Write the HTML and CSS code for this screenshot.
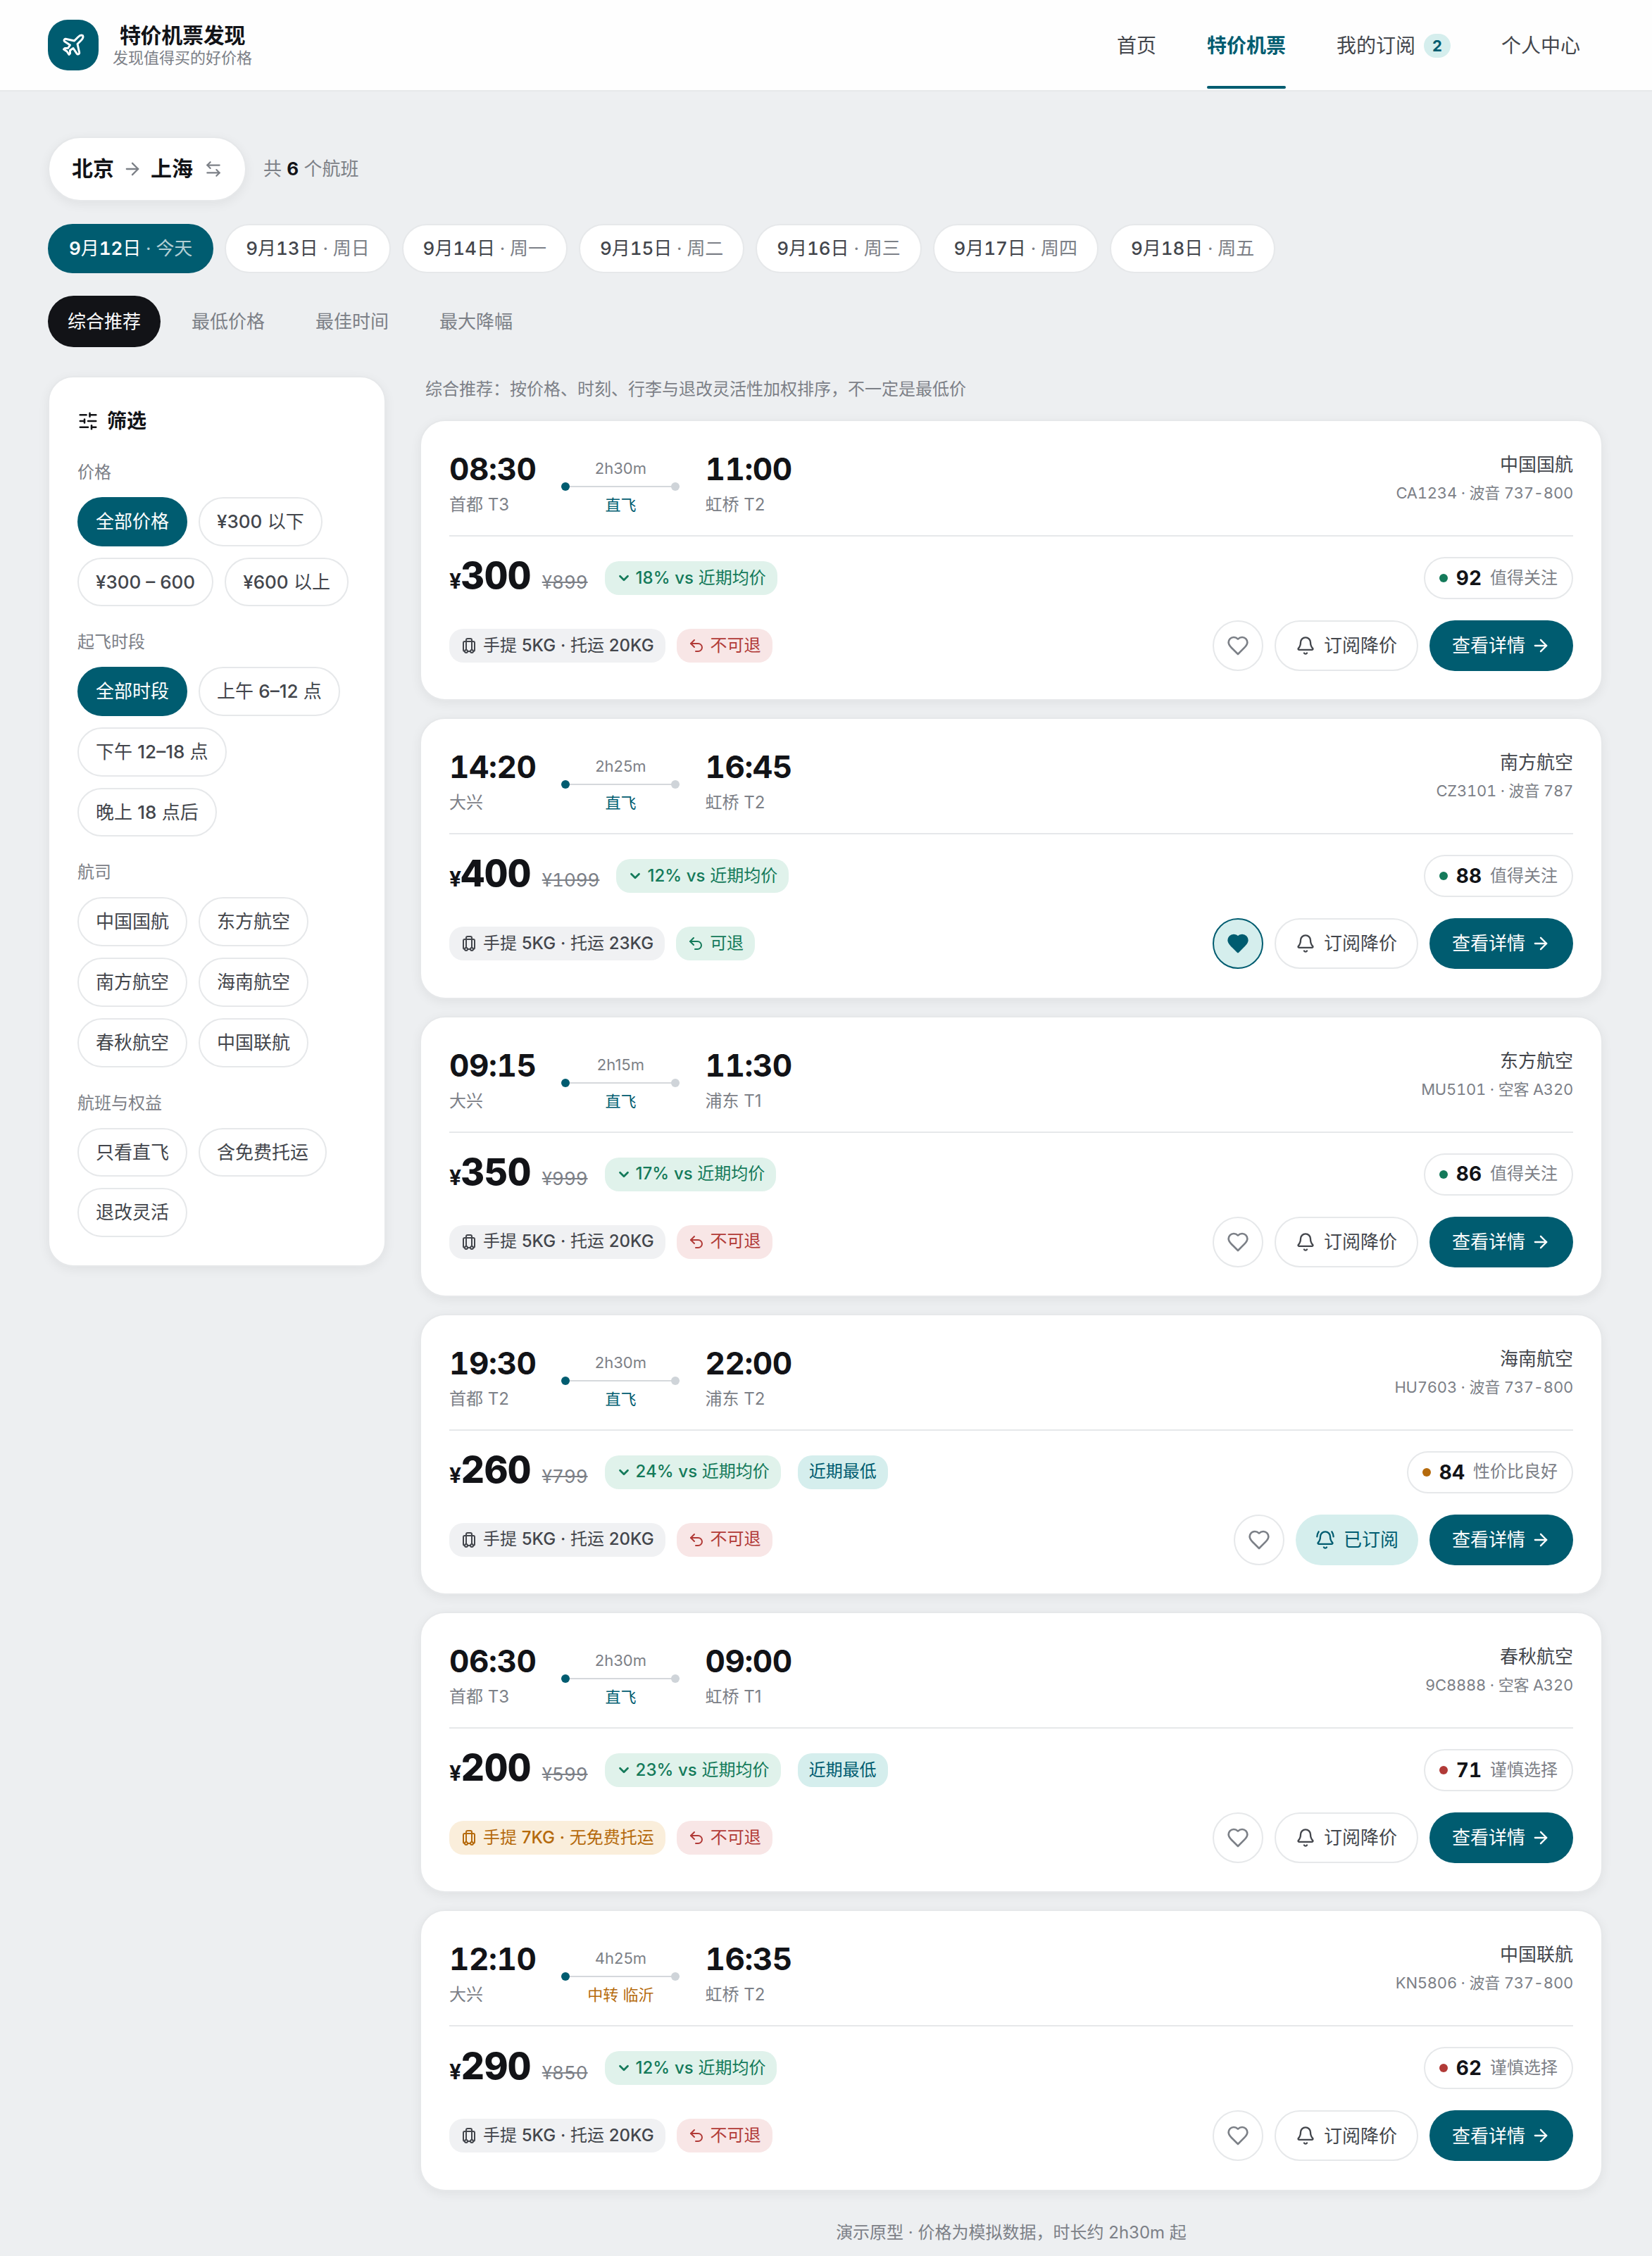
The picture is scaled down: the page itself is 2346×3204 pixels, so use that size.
FILE: index.html
```html
<!DOCTYPE html>
<html lang="zh-CN">
<head>
    <meta charset="UTF-8">
    <meta name="viewport" content="width=device-width, initial-scale=1.0">
    <title>特价机票发现</title>
    <link rel="stylesheet" href="styles.css">
</head>
<body>
    <svg class="sprite" xmlns="http://www.w3.org/2000/svg">
        <symbol id="plane" viewBox="0 0 24 24"><path d="M17.8 19.2 16 11l3.5-3.5C21 6 21.5 4 21 3c-1-.5-3 0-4.5 1.5L13 8 4.8 6.2c-.5-.1-.9.1-1.1.5l-.3.5c-.2.5-.1 1 .3 1.3L9 12l-2 3H4l-1 1 3 2 2 3 1-1v-3l3-2 3.5 5.3c.3.4.8.5 1.3.3l.5-.2c.4-.3.6-.7.5-1.2z"/></symbol>
        <symbol id="arrow" viewBox="0 0 24 24"><path d="M5 12h14"/><path d="m12 5 7 7-7 7"/></symbol>
        <symbol id="swap" viewBox="0 0 24 24"><path d="M8 3 4 7l4 4"/><path d="M4 7h16"/><path d="m16 21 4-4-4-4"/><path d="M20 17H4"/></symbol>
        <symbol id="sliders" viewBox="0 0 24 24"><path d="M10 5H3"/><path d="M12 19H3"/><path d="M14 3v4"/><path d="M16 17v4"/><path d="M21 12h-9"/><path d="M21 19h-5"/><path d="M21 5h-7"/><path d="M8 10v4"/><path d="M8 12H3"/></symbol>
        <symbol id="chevron" viewBox="0 0 24 24"><path d="m6 9 6 6 6-6"/></symbol>
        <symbol id="luggage" viewBox="0 0 24 24"><path d="M6 20a2 2 0 0 1-2-2V8a2 2 0 0 1 2-2h12a2 2 0 0 1 2 2v10a2 2 0 0 1-2 2"/><path d="M8 18V4a2 2 0 0 1 2-2h4a2 2 0 0 1 2 2v14"/><path d="M10 20h4"/><circle cx="16" cy="20" r="2"/><circle cx="8" cy="20" r="2"/></symbol>
        <symbol id="undo" viewBox="0 0 24 24"><path d="M9 14 4 9l5-5"/><path d="M4 9h10.5a5.5 5.5 0 0 1 5.5 5.5a5.5 5.5 0 0 1-5.5 5.5H11"/></symbol>
        <symbol id="heart" viewBox="0 0 24 24"><path d="M19 14c1.49-1.46 3-3.21 3-5.5A5.5 5.5 0 0 0 16.5 3c-1.76 0-3 .5-4.5 2-1.5-1.5-2.74-2-4.5-2A5.5 5.5 0 0 0 2 8.5c0 2.3 1.5 4.05 3 5.5l7 7Z"/></symbol>
        <symbol id="bell" viewBox="0 0 24 24"><path d="M10.268 21a2 2 0 0 0 3.464 0"/><path d="M3.262 15.326A1 1 0 0 0 4 17h16a1 1 0 0 0 .74-1.673C19.41 13.956 18 12.499 18 8A6 6 0 0 0 6 8c0 4.499-1.411 5.956-2.738 7.326"/></symbol>
        <symbol id="bell-ring" viewBox="0 0 24 24"><path d="M10.268 21a2 2 0 0 0 3.464 0"/><path d="M22 8c0-2.3-.8-4.3-2-6"/><path d="M3.262 15.326A1 1 0 0 0 4 17h16a1 1 0 0 0 .74-1.673C19.41 13.956 18 12.499 18 8A6 6 0 0 0 6 8c0 4.499-1.411 5.956-2.738 7.326"/><path d="M4 2C2.8 3.7 2 5.7 2 8"/></symbol>
    </svg>

    <header class="topbar">
        <div class="brand">
            <span class="logo"><svg class="icon"><use href="#plane"/></svg></span>
            <div class="brand-text">
                <div class="brand-name">特价机票发现</div>
                <div class="brand-sub">发现值得买的好价格</div>
            </div>
        </div>
        <nav class="nav">
            <a class="nav-item">首页</a>
            <a class="nav-item active">特价机票</a>
            <a class="nav-item">我的订阅<span class="count">2</span></a>
            <a class="nav-item">个人中心</a>
        </nav>
    </header>

    <main class="page">
        <div class="route-row">
            <button class="route">
                <span>北京</span>
                <svg class="icon route-arrow"><use href="#arrow"/></svg>
                <span>上海</span>
                <svg class="icon route-swap"><use href="#swap"/></svg>
            </button>
            <span class="total">共 <b>6</b> 个航班</span>
        </div>

        <div class="dates" id="dates"></div>

        <div class="sorts">
            <button class="sort active">综合推荐</button>
            <button class="sort">最低价格</button>
            <button class="sort">最佳时间</button>
            <button class="sort">最大降幅</button>
        </div>

        <div class="layout">
            <aside class="filters">
                <h2 class="filters-title"><svg class="icon"><use href="#sliders"/></svg>筛选</h2>
                <h3 class="group-name">价格</h3>
                <div class="chips">
                    <button class="chip active">全部价格</button>
                    <button class="chip"><span class="num">¥300</span> 以下</button>
                    <button class="chip"><span class="num">¥300 – 600</span></button>
                    <button class="chip"><span class="num">¥600</span> 以上</button>
                </div>
                <h3 class="group-name">起飞时段</h3>
                <div class="chips">
                    <button class="chip active">全部时段</button>
                    <button class="chip">上午 <span class="num">6–12</span> 点</button>
                    <button class="chip">下午 <span class="num">12–18</span> 点</button>
                    <button class="chip">晚上 <span class="num">18</span> 点后</button>
                </div>
                <h3 class="group-name">航司</h3>
                <div class="chips">
                    <button class="chip">中国国航</button>
                    <button class="chip">东方航空</button>
                    <button class="chip">南方航空</button>
                    <button class="chip">海南航空</button>
                    <button class="chip">春秋航空</button>
                    <button class="chip">中国联航</button>
                </div>
                <h3 class="group-name">航班与权益</h3>
                <div class="chips">
                    <button class="chip">只看直飞</button>
                    <button class="chip">含免费托运</button>
                    <button class="chip">退改灵活</button>
                </div>
            </aside>

            <section class="results">
                <p class="note">综合推荐：按价格、时刻、行李与退改灵活性加权排序，不一定是最低价</p>
                <div class="cards" id="cards"></div>
                <p class="footnote">演示原型 · 价格为模拟数据，时长约 2h30m 起</p>
            </section>
        </div>
    </main>

    <script>
        const dates = [
            ['9月12日', '今天'], ['9月13日', '周日'], ['9月14日', '周一'], ['9月15日', '周二'],
            ['9月16日', '周三'], ['9月17日', '周四'], ['9月18日', '周五']
        ];

        const flights = [
            { dep: '08:30', from: '首都 T3', dur: '2h30m', arr: '11:00', to: '虹桥 T2', airline: '中国国航', plane: 'CA1234 · 波音 737-800', price: 300, old: 899, drop: 18, bag: '手提 5KG · 托运 20KG', score: 92, level: 'good', label: '值得关注' },
            { dep: '14:20', from: '大兴', dur: '2h25m', arr: '16:45', to: '虹桥 T2', airline: '南方航空', plane: 'CZ3101 · 波音 787', price: 400, old: 1099, drop: 12, bag: '手提 5KG · 托运 23KG', refund: true, score: 88, level: 'good', label: '值得关注', liked: true },
            { dep: '09:15', from: '大兴', dur: '2h15m', arr: '11:30', to: '浦东 T1', airline: '东方航空', plane: 'MU5101 · 空客 A320', price: 350, old: 999, drop: 17, bag: '手提 5KG · 托运 20KG', score: 86, level: 'good', label: '值得关注' },
            { dep: '19:30', from: '首都 T2', dur: '2h30m', arr: '22:00', to: '浦东 T2', airline: '海南航空', plane: 'HU7603 · 波音 737-800', price: 260, old: 799, drop: 24, lowest: true, bag: '手提 5KG · 托运 20KG', score: 84, level: 'fair', label: '性价比良好', subscribed: true },
            { dep: '06:30', from: '首都 T3', dur: '2h30m', arr: '09:00', to: '虹桥 T1', airline: '春秋航空', plane: '9C8888 · 空客 A320', price: 200, old: 599, drop: 23, lowest: true, bag: '手提 7KG · 无免费托运', noBag: true, score: 71, level: 'poor', label: '谨慎选择' },
            { dep: '12:10', from: '大兴', dur: '4h25m', via: '中转 临沂', arr: '16:35', to: '虹桥 T2', airline: '中国联航', plane: 'KN5806 · 波音 737-800', price: 290, old: 850, drop: 12, bag: '手提 5KG · 托运 20KG', score: 62, level: 'poor', label: '谨慎选择' }
        ];

        function icon(name) {
            return `<svg class="icon"><use href="#${name}"/></svg>`;
        }

        // digits and latin letters are set a little heavier than the Chinese text
        function num(text) {
            return text.replace(/[0-9A-Za-z%·]+/g, '<span class="num">$&</span>');
        }

        function card(f) {
            return `
            <article class="card">
                <div class="card-top">
                    <div class="stop"><div class="time">${f.dep}</div><div class="place">${f.from}</div></div>
                    <div class="leg">
                        <div class="duration">${f.dur}</div>
                        <div class="track"><i></i><i></i></div>
                        <div class="${f.via ? 'via transfer' : 'via'}">${f.via || '直飞'}</div>
                    </div>
                    <div class="stop"><div class="time">${f.arr}</div><div class="place">${f.to}</div></div>
                    <div class="carrier"><div class="airline">${f.airline}</div><div class="aircraft">${f.plane}</div></div>
                </div>
                <div class="card-price">
                    <div class="fare"><span class="price"><small>¥</small>${f.price}</span><s class="old">¥${f.old}</s></div>
                    <span class="tag drop">${icon('chevron')}<span>${num(f.drop + '% vs 近期均价')}</span></span>
                    ${f.lowest ? '<span class="tag lowest">近期最低</span>' : ''}
                    <div class="score ${f.level}"><i></i><b>${f.score}</b>${f.label}</div>
                </div>
                <div class="card-actions">
                    <span class="tag ${f.noBag ? 'warn' : 'plain'}">${icon('luggage')}<span>${num(f.bag)}</span></span>
                    <span class="tag ${f.refund ? 'ok' : 'bad'}">${icon('undo')}${f.refund ? '可退' : '不可退'}</span>
                    <div class="actions">
                        <button class="${f.liked ? 'like liked' : 'like'}">${icon('heart')}</button>
                        ${f.subscribed
                            ? `<button class="btn subscribed">${icon('bell-ring')}已订阅</button>`
                            : `<button class="btn subscribe">${icon('bell')}订阅降价</button>`}
                        <button class="btn detail">查看详情${icon('arrow')}</button>
                    </div>
                </div>
            </article>`;
        }

        document.getElementById('dates').innerHTML = dates.map(([day, week], i) =>
            `<button class="${i === 0 ? 'date active' : 'date'}">${num(day)} <span class="week">· ${week}</span></button>`).join('');
        document.getElementById('cards').innerHTML = flights.map(card).join('');
    </script>
</body>
</html>
```

FILE: styles.css
```css
* {
    box-sizing: border-box;
}
:root {
    --teal: #005c70;
    --teal-soft: #d5eeed;
    --ink: #121317;
    --text: #43464c;
    --muted: #7c8087;
    --line: #e6e8ea;
}
body {
    margin: 0;
    background: #edeff1;
    color: var(--ink);
    font-family: Inter, "Noto Sans CJK SC", sans-serif;
    font-size: 26px;
    line-height: 1.45;
}
button {
    font: inherit;
    color: inherit;
    border: none;
    background: none;
    padding: 0;
    white-space: nowrap;
    cursor: pointer;
}
h2, h3, p {
    margin: 0;
}
.sprite {
    display: none;
}
.icon {
    width: 28px;
    height: 28px;
    flex: none;
    fill: none;
    stroke: currentColor;
    stroke-width: 2;
    stroke-linecap: round;
    stroke-linejoin: round;
}
.num {
    font-weight: 500;
}

/* top bar */
.topbar {
    display: flex;
    justify-content: space-between;
    height: 130px;
    padding: 0 70px 0 68px;
    background: #fefefe;
    border-bottom: 2px solid var(--line);
}
.brand {
    display: flex;
    align-items: center;
    gap: 20px;
}
.logo {
    display: flex;
    align-items: center;
    justify-content: center;
    width: 72px;
    height: 72px;
    border-radius: 28px;
    background: var(--teal);
    color: #fff;
}
.logo .icon {
    width: 36px;
    height: 36px;
}
.brand-text {
    padding-top: 3px;
    text-align: center;
}
.brand-name {
    font-size: 30px;
    font-weight: 700;
    line-height: 33px;
    letter-spacing: -0.01em;
}
.brand-sub {
    font-size: 22px;
    line-height: 30px;
    color: var(--muted);
}
.nav {
    display: flex;
    gap: 8px;
}
.nav-item {
    position: relative;
    display: flex;
    align-items: center;
    gap: 12px;
    padding: 2px 32px 0;
    font-size: 28px;
    color: var(--text);
}
.nav-item.active {
    color: var(--teal);
    font-weight: 700;
}
.nav-item.active::after {
    content: "";
    position: absolute;
    left: 32px;
    right: 32px;
    bottom: 2px;
    height: 4px;
    border-radius: 2px;
    background: var(--teal);
}
.count {
    min-width: 38px;
    height: 34px;
    border-radius: 17px;
    background: var(--teal-soft);
    color: var(--teal);
    font-size: 22px;
    font-weight: 700;
    line-height: 34px;
    text-align: center;
}

/* route, dates and sorting */
.page {
    padding: 64px 70px 0 68px;
}
.route-row {
    display: flex;
    align-items: center;
    gap: 24px;
}
.route {
    display: flex;
    align-items: center;
    gap: 12px;
    height: 92px;
    padding: 0 32px;
    border: 2px solid var(--line);
    border-radius: 46px;
    background: #fff;
    box-shadow: 0 4px 16px rgba(18, 19, 23, 0.06);
    font-size: 30px;
    font-weight: 700;
}
.route .icon {
    color: var(--muted);
}
.route .route-swap {
    width: 26px;
    height: 26px;
    margin-left: 4px;
}
.total {
    color: var(--muted);
}
.total b {
    color: var(--ink);
}
.dates {
    display: flex;
    gap: 16px;
    margin-top: 32px;
    font-variant-numeric: tabular-nums;
}
.date {
    height: 70px;
    padding: 0 28px;
    border: 2px solid var(--line);
    border-radius: 35px;
    background: #fff;
    color: var(--text);
    letter-spacing: -0.07px;
}
.week {
    color: var(--muted);
}
.date.active {
    background: var(--teal);
    border-color: var(--teal);
    color: #fff;
}
.date.active .num {
    font-weight: 600;
}
.date.active .week {
    color: #b3ced4;
}
.sorts {
    display: flex;
    gap: 16px;
    margin-top: 32px;
}
.sort {
    height: 73px;
    padding: 0 28px;
    border-radius: 37px;
    color: var(--muted);
}
.sort.active {
    background: var(--ink);
    color: #fff;
}

/* filters */
.layout {
    display: grid;
    grid-template-columns: 480px 1fr;
    gap: 48px;
    align-items: start;
    margin-top: 41px;
}
.filters {
    padding: 40px;
    border: 2px solid var(--line);
    border-radius: 36px;
    background: #fff;
    box-shadow: 0 4px 16px rgba(18, 19, 23, 0.06);
}
.filters-title {
    display: flex;
    align-items: center;
    gap: 12px;
    font-size: 28px;
    font-weight: 700;
    line-height: 44px;
}
.filters-title .icon {
    width: 30px;
    height: 30px;
}
.group-name {
    margin: 32px 0 16px;
    color: var(--muted);
    font-size: 24px;
    font-weight: 400;
    line-height: 38px;
}
.chips {
    display: flex;
    flex-wrap: wrap;
    gap: 16px;
}
.chip {
    height: 69.7px;
    padding: 0 24px;
    border: 2px solid var(--line);
    border-radius: 35px;
    color: var(--text);
}
.chip.active {
    background: var(--teal);
    border-color: var(--teal);
    color: #fff;
}

/* results */
.note {
    padding: 0 8px;
    margin-bottom: 25px;
    color: var(--muted);
    font-size: 24px;
    line-height: 37px;
}
.cards {
    display: flex;
    flex-direction: column;
    gap: 24px;
}
.card {
    height: 399.3px;
    padding: 40px;
    border: 2px solid var(--line);
    border-radius: 36px;
    background: #fff;
    box-shadow: 0 4px 16px rgba(18, 19, 23, 0.06);
}
.card-top {
    display: flex;
    gap: 36px;
    height: 124px;
    border-bottom: 2px solid var(--line);
}
.time {
    font-size: 44px;
    font-weight: 700;
    line-height: 56px;
    letter-spacing: -0.01em;
    font-variant-numeric: tabular-nums;
}
.place {
    margin-top: 5px;
    color: var(--muted);
    font-size: 24px;
    line-height: 35px;
}
.leg {
    width: 168px;
    padding-top: 11px;
    text-align: center;
    font-size: 22px;
    line-height: 32px;
}
.duration {
    color: var(--muted);
}
.track {
    display: flex;
    justify-content: space-between;
    margin: 4px 0;
    background: linear-gradient(#d5d8dc, #d5d8dc) center / 100% 2px no-repeat;
}
.track i {
    width: 12px;
    height: 12px;
    border-radius: 50%;
    background: var(--teal);
}
.track i:last-child {
    background: #cfd4d9;
}
.via {
    color: var(--teal);
}
.via.transfer {
    color: #b56a0c;
}
.carrier {
    margin-left: auto;
    text-align: right;
}
.airline {
    color: var(--text);
    line-height: 43px;
}
.aircraft {
    margin-top: 3px;
    color: var(--muted);
    font-size: 22px;
    line-height: 32px;
    letter-spacing: -0.01em;
    font-variant-numeric: tabular-nums;
}
.card-price {
    display: flex;
    align-items: center;
    gap: 24px;
    margin-top: 29px;
    height: 60px;
}
.fare {
    display: flex;
    align-items: baseline;
    gap: 16px;
    padding-bottom: 4px;
    font-variant-numeric: tabular-nums;
}
.price {
    font-size: 52px;
    font-weight: 800;
    line-height: 1;
    letter-spacing: -0.01em;
}
.price small {
    font-size: 30px;
    font-weight: 700;
}
.old {
    color: var(--muted);
}
.tag {
    display: flex;
    align-items: center;
    gap: 8px;
    height: 48px;
    padding: 0 16px;
    border-radius: 20px;
    font-size: 24px;
}
.tag .icon {
    width: 24px;
    height: 24px;
}
.tag.drop {
    gap: 6px;
    background: #e0f2eb;
    color: #147a5a;
}
.tag.drop .icon {
    width: 22px;
    height: 22px;
    stroke-width: 3;
}
.tag.lowest {
    background: var(--teal-soft);
    color: var(--teal);
}
.tag.plain {
    background: #f0f1f3;
    color: var(--text);
}
.tag.warn {
    background: #faeedb;
    color: #b56a0c;
}
.tag.ok {
    background: #e0f2eb;
    color: #147a5a;
}
.tag.bad {
    background: #f8e6e6;
    color: #b13a37;
}
.score {
    display: flex;
    align-items: center;
    gap: 12px;
    height: 60px;
    margin-left: auto;
    padding: 0 20px;
    border: 2px solid var(--line);
    border-radius: 30px;
    color: var(--muted);
    font-size: 24px;
}
.score b {
    color: var(--ink);
    font-size: 28px;
    font-variant-numeric: tabular-nums;
}
.score i {
    width: 12px;
    height: 12px;
    border-radius: 50%;
    background: #147a5a;
}
.score.fair i {
    background: #b56a0c;
}
.score.poor i {
    background: #b13a37;
}
.card-actions {
    display: flex;
    align-items: center;
    gap: 16px;
    margin-top: 30px;
}
.actions {
    display: flex;
    gap: 16px;
    margin-left: auto;
}
.btn {
    display: flex;
    align-items: center;
    gap: 12px;
    height: 72px;
    padding: 0 28px;
    border-radius: 36px;
}
.subscribe {
    border: 2px solid var(--line);
    color: var(--text);
}
.subscribed {
    background: var(--teal-soft);
    color: var(--teal);
}
.detail {
    gap: 8px;
    padding: 0 32px;
    background: var(--teal);
    color: #fff;
}
.like {
    display: flex;
    align-items: center;
    justify-content: center;
    width: 72px;
    height: 72px;
    border: 2px solid var(--line);
    border-radius: 50%;
    color: var(--muted);
}
.like .icon {
    width: 32px;
    height: 32px;
}
.like.liked {
    background: var(--teal-soft);
    border-color: var(--teal);
    color: var(--teal);
}
.like.liked .icon {
    fill: currentColor;
}
.footnote {
    margin-top: 40px;
    padding-bottom: 14px;
    color: var(--muted);
    font-size: 24px;
    line-height: 38px;
    text-align: center;
}
```
